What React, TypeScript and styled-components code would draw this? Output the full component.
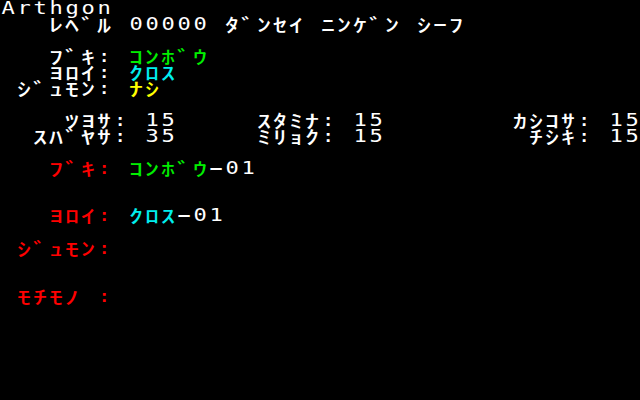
import React from 'react';
import styled, { createGlobalStyle } from 'styled-components';

const Global = createGlobalStyle`
  html, body { margin: 0; padding: 0; background: #000; }
  body { width: 640px; height: 400px; overflow: hidden; }
`;

const WHITE = '#ffffff';
const GREEN = '#00ee00';
const CYAN = '#00eeee';
const YELLOW = '#ffff00';
const RED = '#ff0000';

const Screen = styled.main`
  width: 640px;
  height: 400px;
  background: #000;
  display: flex;
  flex-direction: column;
  overflow: hidden;
`;

const Line = styled.div<{ $col: number; $top: number }>`
  display: flex;
  height: 16px;
  padding-left: ${(p) => p.$col * 16}px;
  margin-top: ${(p) => p.$top}px;
`;

const Cell = styled.span<{ $color: string }>`
  flex: none;
  width: 16px;
  height: 16px;
  display: flex;
  align-items: center;
  justify-content: center;
  color: ${(p) => p.$color};
`;

const Kana = styled.span`
  display: inline-block;
  font-family: "Noto Sans CJK JP", sans-serif;
  font-size: 16px;
  line-height: 16px;
  font-weight: 500;
  transform: scale(1.75, 1.15);
`;

const Latin = styled.span`
  display: inline-block;
  font-family: "DejaVu Sans Mono", monospace;
  font-size: 17px;
  line-height: 16px;
  font-weight: 400;
  transform: scaleX(1.3);
`;

type Seg = [string, string];

const isKana = (c: string) => {
  const code = c.codePointAt(0) || 0;
  return code >= 0xff61 && code <= 0xff9f;
};

const TextLine: React.FC<{ col: number; top?: number; segs: Seg[] }> = ({ col, top = 0, segs }) => (
  <Line $col={col} $top={top}>
    {segs.flatMap(([text, color], si) =>
      Array.from(text).map((c, ci) => (
        <Cell key={`${si}-${ci}`} $color={color}>
          {c === ' ' ? null : isKana(c) ? <Kana>{c}</Kana> : <Latin>{c}</Latin>}
        </Cell>
      ))
    )}
  </Line>
);

export default function App() {
  return (
    <>
      <Global />
      <Screen>
        <TextLine col={0} segs={[['Arthgon', WHITE]]} />
        <TextLine col={3} segs={[['ﾚﾍﾞﾙ 00000 ﾀﾞﾝｾｲ ﾆﾝｹﾞﾝ ｼｰﾌ', WHITE]]} />
        <TextLine col={3} top={16} segs={[['ﾌﾞｷ: ', WHITE], ['ｺﾝﾎﾞｳ', GREEN]]} />
        <TextLine col={3} segs={[['ﾖﾛｲ: ', WHITE], ['ｸﾛｽ', CYAN]]} />
        <TextLine col={1} segs={[['ｼﾞｭﾓﾝ: ', WHITE], ['ﾅｼ', YELLOW]]} />
        <TextLine col={4} top={16} segs={[['ﾂﾖｻ: 15     ｽﾀﾐﾅ: 15        ｶｼｺｻ: 15', WHITE]]} />
        <TextLine col={2} segs={[['ｽﾊﾞﾔｻ: 35     ﾐﾘｮｸ: 15         ﾁｼｷ: 15', WHITE]]} />
        <TextLine col={3} top={16} segs={[['ﾌﾞｷ: ', RED], ['ｺﾝﾎﾞｳ', GREEN], ['ｰ01', WHITE]]} />
        <TextLine col={3} top={31} segs={[['ﾖﾛｲ: ', RED], ['ｸﾛｽ', CYAN], ['ｰ01', WHITE]]} />
        <TextLine col={1} top={17} segs={[['ｼﾞｭﾓﾝ:', RED]]} />
        <TextLine col={1} top={32} segs={[['ﾓﾁﾓﾉ :', RED]]} />
      </Screen>
    </>
  );
}
